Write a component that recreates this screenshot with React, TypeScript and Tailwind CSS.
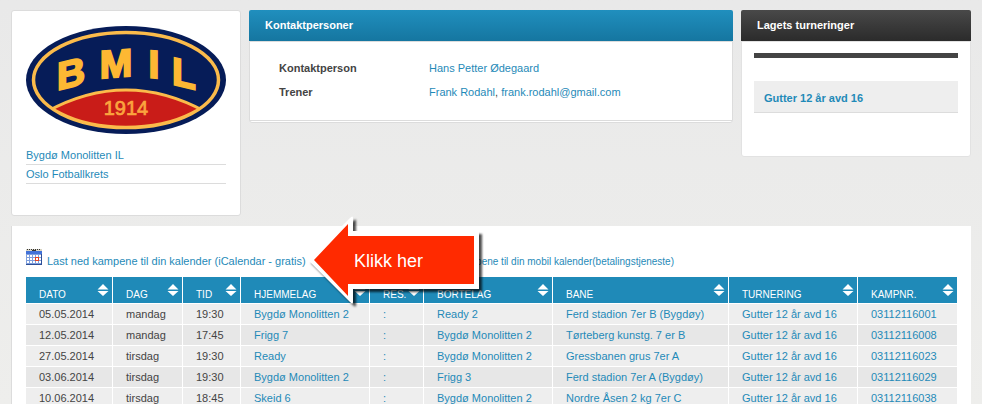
import type { ReactNode } from 'react';

type Column = { label: string; width: string };

const columns: Column[] = [
  { label: 'DATO', width: 'w-[87px]' },
  { label: 'DAG', width: 'w-[70px]' },
  { label: 'TID', width: 'w-[58px]' },
  { label: 'HJEMMELAG', width: 'w-[129px]' },
  { label: 'RES.', width: 'w-[54px]' },
  { label: 'BORTELAG', width: 'w-[129px]' },
  { label: 'BANE', width: 'w-[176px]' },
  { label: 'TURNERING', width: 'w-[129px]' },
  { label: 'KAMPNR.', width: 'w-[99px]' },
];

const matches: string[][] = [
  ['05.05.2014', 'mandag', '19:30', 'Bygdø Monolitten 2', ':', 'Ready 2', 'Ferd stadion 7er B (Bygdøy)', 'Gutter 12 år avd 16', '03112116001'],
  ['12.05.2014', 'mandag', '17:45', 'Frigg 7', ':', 'Bygdø Monolitten 2', 'Tørteberg kunstg. 7 er B', 'Gutter 12 år avd 16', '03112116008'],
  ['27.05.2014', 'tirsdag', '19:30', 'Ready', ':', 'Bygdø Monolitten 2', 'Gressbanen grus 7er A', 'Gutter 12 år avd 16', '03112116023'],
  ['03.06.2014', 'tirsdag', '19:30', 'Bygdø Monolitten 2', ':', 'Frigg 3', 'Ferd stadion 7er A (Bygdøy)', 'Gutter 12 år avd 16', '03112116029'],
  ['10.06.2014', 'tirsdag', '18:45', 'Skeid 6', ':', 'Bygdø Monolitten 2', 'Nordre Åsen 2 kg 7er C', 'Gutter 12 år avd 16', '03112116038'],
];

function Link({ children }: { children: ReactNode }) {
  return (
    <a href="#" className="text-[#1f8ab8]">
      {children}
    </a>
  );
}

function ClubLogo() {
  return (
    <svg viewBox="0 0 200 108" className="block h-[108px] w-[200px]" role="img" aria-label="BMIL 1914">
      <defs>
        <clipPath id="inner">
          <ellipse cx="100" cy="54" rx="92" ry="47" />
        </clipPath>
      </defs>
      <ellipse cx="100" cy="54" rx="100" ry="54" fill="#061c58" />
      <path d="M20 86 Q100 42 180 86 L180 108 L20 108 Z" fill="#c91c18" stroke="#fbbb4b" strokeWidth="3" clipPath="url(#inner)" />
      <ellipse cx="100" cy="54" rx="92.5" ry="47.5" fill="none" stroke="#fbbb4b" strokeWidth="3.5" />
      <g fill="#fdb833" stroke="#fdb833" strokeWidth="2" fontFamily="Liberation Sans, Arial, sans-serif" fontWeight="700" fontSize="39" textAnchor="middle">
        <text transform="translate(45 61) skewY(-14)">B</text>
        <text transform="translate(90 51) skewY(-4)">M</text>
        <text transform="translate(128 52) skewY(4)">I</text>
        <text transform="translate(158 61) skewY(13)">L</text>
      </g>
      <text x="100" y="89" textAnchor="middle" fontFamily="Liberation Sans, Arial, sans-serif" fontSize="20" fill="#fba53e" stroke="#fba53e" strokeWidth="0.7">
        1914
      </text>
    </svg>
  );
}

function CalendarIcon() {
  return (
    <svg viewBox="0 0 16 16" className="h-4 w-4 shrink-0" shapeRendering="crispEdges" aria-hidden="true">
      <path d="M0 2h16v14H0z" fill="#7f9fdc" />
      <path d="M15 3h1v13H0v-1h15z" fill="#2f4f96" />
      <path d="M0 0h16v2H0z" fill="#d9d5c4" />
      <path d="M1 0h1v1H1zM3 0h1v1H3zM5 0h1v1H5zM6 1h4v1H6zM7 0h1v1H7zM9 0h1v1H9zM11 0h1v1h-1zM13 0h1v1h-1z" fill="#333" />
      <path d="M0 2h16v3H0z" fill="#4272d8" />
      <path d="M1 6h2v2H1zM4 6h2v2H4zM7 6h2v2H7zM10 6h2v2h-2zM13 6h2v2h-2zM1 9h2v2H1zM4 9h2v2H4zM7 9h2v2H7zM13 9h2v2h-2zM1 12h2v2H1zM4 12h2v2H4zM7 12h2v2H7zM10 12h2v2h-2zM13 12h2v2h-2z" fill="#fff" />
      <path d="M9 8h4v4H9z" fill="#e8431f" />
      <path d="M10 9h2v2h-2z" fill="#fff" />
    </svg>
  );
}

function SortIcon() {
  return (
    <svg viewBox="0 0 12 12" className="absolute top-[7px] right-[3px] h-3 w-3" aria-hidden="true">
      <path d="M6 0L11.500 5.500H.5zM.5 7h11L6 12z" fill="#fff" />
    </svg>
  );
}

/* Arrow laid over the page, pointing at the iCalendar link. */
function Callout() {
  return (
    <div className="absolute top-[-12px] left-[281px] z-10 h-[92px] w-[172px]">
      <svg viewBox="0 0 172 92" className="absolute inset-0 h-full w-full overflow-visible" aria-hidden="true">
        <path
          d="M1 46L43 4Q46 1 46 4V17H172V75H46V88Q46 91 43 88Z"
          fill="#fff"
          className="drop-shadow-[3px_3px_1px_rgba(0,0,0,0.7)]"
        />
        <path d="M7 46L41 10V22H167V70H41V82Z" fill="#ff2a00" />
      </svg>
      <span className="absolute top-[35px] left-[47px] text-lg leading-6 text-white">Klikk her</span>
    </div>
  );
}

export default function App() {
  return (
    <div className="h-screen overflow-hidden bg-linear-to-b from-[#e9e9e9] to-[#eeeeec] pt-[10px] pr-[11px] pl-[11px] font-['Liberation_Sans',Arial,sans-serif] text-[11px] leading-4 text-[#444]">
      <div className="flex items-start gap-2">
        <aside className="h-[206px] w-[230px] shrink-0 rounded-[3px] border border-[#dcdcdc] bg-white px-[14px] pt-[15px]">
          <ClubLogo />
          <ul className="pt-3">
            <li className="h-[19px] border-b border-[#dcdcdc] pt-px">
              <Link>Bygdø Monolitten IL</Link>
            </li>
            <li className="h-[19px] border-b border-[#dcdcdc] pt-px">
              <Link>Oslo Fotballkrets</Link>
            </li>
          </ul>
        </aside>

        <section className="min-w-0 grow">
          <h2 className="h-[31px] rounded-t-[2px] bg-linear-to-b from-[#208fbe] to-[#1576a0] px-4 pt-[7px] font-bold text-white">Kontaktpersoner</h2>
          <div className="rounded-b-[3px] border border-[#dcdcdc] bg-white pb-px">
            <dl className="grid grid-cols-[150px_1fr] gap-y-2 border-b border-[#dcdcdc] px-[29px] pt-[18px] pb-[20px]">
              <dt className="font-bold">Kontaktperson</dt>
              <dd>
                <Link>Hans Petter Ødegaard</Link>
              </dd>
              <dt className="font-bold">Trener</dt>
              <dd>
                <Link>Frank Rodahl</Link>, <Link>frank.rodahl@gmail.com</Link>
              </dd>
            </dl>
          </div>
        </section>

        <section className="w-[230px] shrink-0">
          <h2 className="h-[31px] rounded-t-[2px] bg-linear-to-b from-[#494949] to-[#2b2b2b] px-4 pt-[7px] font-bold text-white">Lagets turneringer</h2>
          <div className="rounded-b-[3px] border border-[#e2e2e2] bg-white px-3 pt-[11px] pb-[43px]">
            <div className="h-[5px] bg-[#444]" />
            <div className="mt-[23px] h-8 border-b border-[#dcdcdc] bg-[#eee] px-[10px] pt-[9px] font-bold">
              <Link>Gutter 12 år avd 16</Link>
            </div>
          </div>
        </section>
      </div>

      <main className="mt-[10px] border-l border-[#dcdcdc] bg-white pr-[14px] pl-[14px]">
        <div className="relative flex h-[51px] items-start pt-[23px]">
          <CalendarIcon />
          <div className="ml-[5px] pt-1">
            <Link>Last ned kampene til din kalender (iCalendar - gratis)</Link>
          </div>
          <div className="ml-auto pt-[5px] pr-[283px] text-[10px]">
            <Link>kampene til din mobil kalender(betalingstjeneste)</Link>
          </div>
          <Callout />
        </div>
        <table className="w-full table-fixed border-separate border-spacing-0">
          <thead>
            <tr>
              {columns.map((column) => (
                <th
                  key={column.label}
                  className={`${column.width} relative h-[27px] border-r border-b border-white bg-[#1f8ab8] pt-[10px] pl-[13px] text-left align-bottom text-[10px] leading-4 font-normal text-white last:border-r-0`}
                >
                  {column.label}
                  <SortIcon />
                </th>
              ))}
            </tr>
          </thead>
          <tbody>
            {matches.map((match) => (
              <tr key={match[8]} className="bg-[#eee] even:bg-[#e7e7e7]">
                {match.map((value, index) => (
                  <td key={index} className="h-[21px] border-r border-b border-white pb-px pl-[13px] whitespace-nowrap last:border-r-0">
                    {index < 3 ? value : <Link>{value}</Link>}
                  </td>
                ))}
              </tr>
            ))}
          </tbody>
        </table>
      </main>
    </div>
  );
}
